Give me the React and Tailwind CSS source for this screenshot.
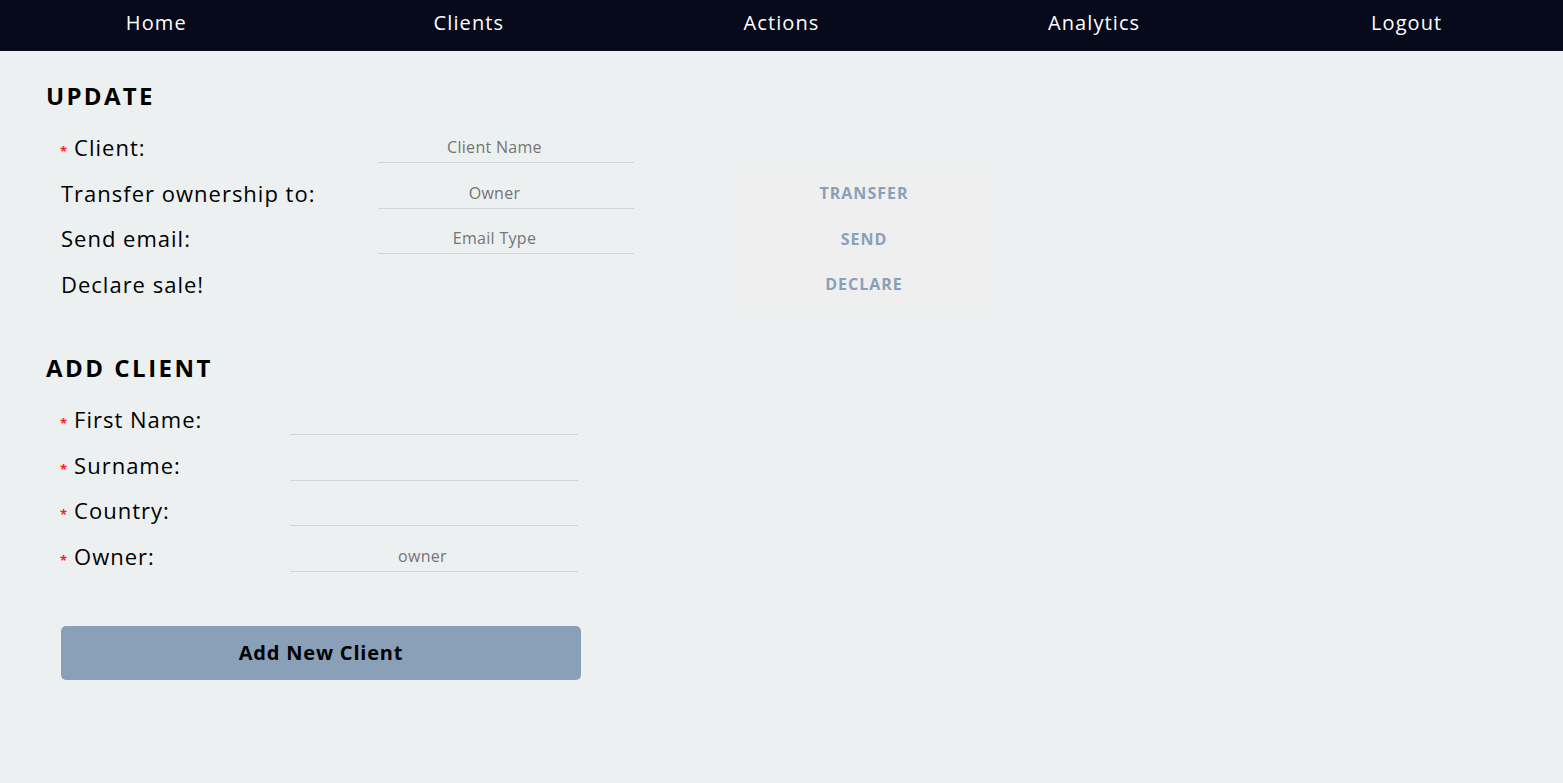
const navItems = ['Home', 'Clients', 'Actions', 'Analytics', 'Logout'];

const Required = () => <span className="text-[#ff1a1a] text-[13px] font-bold mr-[6px] relative top-[4px]">*</span>;

const Underline = ({ placeholder, width }) => (
  <input
    placeholder={placeholder}
    className={`${width} h-[31px] pr-[23px] bg-transparent border-b border-[#d1d5d8] text-center text-[16px] tracking-[0.3px] text-[#333] placeholder:text-[#757575] outline-none`}
  />
);

const ActionButton = ({ children }) => (
  <button className="w-[256px] h-[45.5px] bg-[#efefef] text-[#8aa0b8] font-bold text-[16px]">{children}</button>
);

const App = () => {
  return (
    <div className="min-h-[783px] bg-[#ecf0f1] font-['Open_Sans',sans-serif] text-black">
      <nav className="flex h-[51px] bg-[#060a1b]">
        {navItems.map((item) => (
          <a key={item} className="flex-1 flex items-center justify-center text-white text-[20px] tracking-[1.1px] pb-[5px]">
            {item}
          </a>
        ))}
      </nav>

      <div className="px-[46px]">
        <h2 className="pt-[27px] text-[24px] font-bold tracking-[2.3px] leading-[36px]">UPDATE</h2>

        <div className="grid grid-cols-[317px_256px_102px_256px] grid-rows-[repeat(4,45.5px)] pl-[15px] mt-[11px] items-center text-[22px] tracking-[1px]">
          <div className="flex items-center -ml-[1px]"><Required />Client:</div>
          <Underline placeholder="Client Name" width="w-[256px]" />
          <div />
          <div />

          <div>Transfer ownership to:</div>
          <Underline placeholder="Owner" width="w-[256px]" />
          <div />
          <ActionButton>TRANSFER</ActionButton>

          <div>Send email:</div>
          <Underline placeholder="Email Type" width="w-[256px]" />
          <div />
          <ActionButton>SEND</ActionButton>

          <div>Declare sale!</div>
          <div />
          <div />
          <ActionButton>DECLARE</ActionButton>
        </div>

        <h2 className="mt-[43px] text-[24px] font-bold tracking-[2.5px] leading-[36px]">ADD CLIENT</h2>

        <div className="grid grid-cols-[229px_288px] grid-rows-[repeat(4,45.5px)] pl-[15px] mt-[11px] items-center text-[22px] tracking-[1px]">
          <div className="flex items-center -ml-[1px]"><Required />First Name:</div>
          <Underline width="w-[288px]" />
          <div className="flex items-center -ml-[1px]"><Required />Surname:</div>
          <Underline width="w-[288px]" />
          <div className="flex items-center -ml-[1px]"><Required />Country:</div>
          <Underline width="w-[288px]" />
          <div className="flex items-center -ml-[1px]"><Required />Owner:</div>
          <Underline placeholder="owner" width="w-[288px]" />
        </div>

        <button className="ml-[15px] mt-[47px] w-[520px] h-[54px] rounded-[5px] bg-[#8aa0b8] text-black font-bold text-[20px] tracking-[0.8px]">
          Add New Client
        </button>
      </div>
    </div>
  );
};

export default App;
